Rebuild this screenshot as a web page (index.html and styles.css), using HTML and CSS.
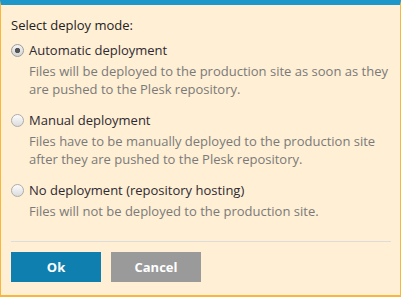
FILE: index.html
```html
<!DOCTYPE html>
<html lang="en">
<head>
<meta charset="utf-8">
<title>Select deploy mode</title>
<link rel="stylesheet" href="styles.css">
</head>
<body>
<div class="dialog">
  <div class="content">
    <div class="title">Select deploy mode:</div>
    <label class="option">
      <span class="option-row"><input type="radio" name="mode" class="radio" checked><span class="option-label">Automatic deployment</span></span>
      <span class="option-desc">Files will be deployed to the production site as soon as they are pushed to the Plesk repository.</span>
    </label>
    <label class="option">
      <span class="option-row"><input type="radio" name="mode" class="radio"><span class="option-label">Manual deployment</span></span>
      <span class="option-desc">Files have to be manually deployed to the production site after they are pushed to the Plesk repository.</span>
    </label>
    <label class="option">
      <span class="option-row"><input type="radio" name="mode" class="radio"><span class="option-label">No deployment (repository hosting)</span></span>
      <span class="option-desc">Files will not be deployed to the production site.</span>
    </label>
    <div class="separator"></div>
    <div class="buttons">
      <button class="btn btn-primary">Ok</button>
      <button class="btn btn-secondary">Cancel</button>
    </div>
  </div>
</div>
</body>
</html>
```
FILE: styles.css
```css
html, body {
  margin: 0;
  padding: 0;
  background: #ffffff;
}
body {
  font-family: "Open Sans", "Liberation Sans", sans-serif;
  font-size: 13px;
  line-height: 18px;
}
.dialog {
  box-sizing: border-box;
  width: 401px;
  height: 297px;
  background: #ffefd4;
  border-top: 5px solid #1d96c9;
  border-left: 1px solid #f8b73a;
  border-right: 1px solid #f8b73a;
  border-bottom: 2px solid #f8b73a;
}
.content {
  padding: 11px 9px 0 10px;
  display: flex;
  flex-direction: column;
}
.title {
  color: #222;
  margin-bottom: 7px;
}
.option {
  display: flex;
  flex-direction: column;
  margin-bottom: 13px;
  cursor: pointer;
}
.option:last-of-type {
  margin-bottom: 0;
}
.option-row {
  display: flex;
  align-items: center;
  height: 18px;
}
.radio {
  appearance: none;
  -webkit-appearance: none;
  box-sizing: border-box;
  width: 13px;
  height: 13px;
  margin: 0 5px 0 0;
  border: 1px solid #acacac;
  border-radius: 50%;
  background: linear-gradient(#fcfcfc, #dcdcdc);
  flex: none;
}
.radio:checked {
  background: radial-gradient(circle, #555 0, #555 2.3px, transparent 3px), linear-gradient(#f4f4f4, #d4d4d4);
  border-color: #9c9c9c;
}
.option-label {
  color: #2e2a33;
}
.option-desc {
  color: #7a7a7a;
  padding-left: 18px;
  margin-top: 3px;
}
.separator {
  height: 1px;
  background: #dcdcdc;
  margin-top: 21px;
}
.buttons {
  display: flex;
  gap: 10px;
  margin-top: 10px;
}
.btn {
  width: 90px;
  height: 30px;
  border: none;
  border-radius: 0;
  padding: 0;
  font-family: "Open Sans", "Liberation Sans", sans-serif;
  font-size: 13px;
  font-weight: 700;
  color: #fff;
  cursor: pointer;
}
.btn-primary {
  background: #0f7fb0;
}
.btn-secondary {
  background: #9a9a9a;
}
```
